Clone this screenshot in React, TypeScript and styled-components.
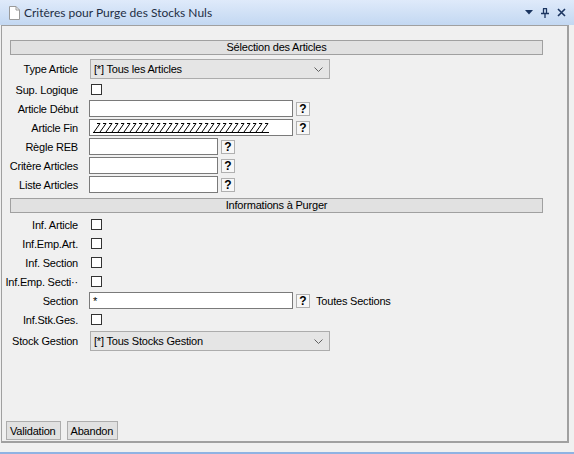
import React from "react";
import styled, { createGlobalStyle } from "styled-components";

const Global = createGlobalStyle`
  html, body { margin: 0; padding: 0; background: #f0f0f0; }
  body {
    font-family: "Liberation Sans", Arial, sans-serif;
    font-size: 11px;
    letter-spacing: -0.2px;
    color: #000;
  }
`;

const Window = styled.div`
  width: 574px;
  height: 454px;
  display: flex;
  flex-direction: column;
  background: #f0f0f0;
  overflow: hidden;
`;

const TitleBar = styled.div`
  height: 25px;
  flex: none;
  display: flex;
  align-items: center;
  padding: 0 9px;
  box-sizing: border-box;
  background: linear-gradient(#dfeafa, #c3d8f2);
`;

const TitleText = styled.span`
  font-family: Lato, "Open Sans", sans-serif;
  font-size: 12px;
  letter-spacing: 0;
  color: #1e2e44;
  margin-left: 4px;
  flex: 1;
`;

const TitleTools = styled.div`
  display: flex;
  align-items: center;
  gap: 8px;
  margin-right: -1px;
`;

const Panel = styled.div`
  flex: none;
  height: 418px;
  margin: 0 5px 0 1px;
  box-sizing: border-box;
  border: 1px solid #a0a0a0;
  border-right-width: 2px;
  border-bottom-width: 2px;
  display: flex;
  flex-direction: column;
`;

const Form = styled.div`
  padding: 14px 24px 0 8px;
  display: flex;
  flex-direction: column;
  flex: 1;
`;

const SectionBar = styled.div<{ $top?: number }>`
  height: 15px;
  box-sizing: border-box;
  margin-top: ${(p) => p.$top ?? 0}px;
  margin-bottom: ${(p) => (p.$top ? 2 : 3)}px;
  background: #e1e1e1;
  border: 1px solid #a0a0a0;
  display: flex;
  align-items: center;
  justify-content: center;
  line-height: 13px;
`;

const Row = styled.div<{ $h?: number }>`
  display: grid;
  grid-template-columns: 68px auto;
  column-gap: 11px;
  align-items: center;
  height: ${(p) => p.$h ?? 19}px;
`;

const Label = styled.div`
  display: flex;
  justify-content: flex-end;
  white-space: nowrap;
  min-width: 0;
`;

const Controls = styled.div`
  display: flex;
  align-items: center;
`;

const Select = styled.div`
  width: 240px;
  height: 20px;
  margin-left: 1px;
  box-sizing: border-box;
  background: #e5e5e5;
  border: 1px solid #acacac;
  display: flex;
  align-items: center;
  justify-content: space-between;
  padding: 0 6px 0 3px;
`;

const CheckBox = styled.div`
  width: 11px;
  height: 11px;
  margin-left: 2px;
  box-sizing: border-box;
  border: 1px solid #333;
  background: #fff;
`;

const Field = styled.div<{ $w: number }>`
  width: ${(p) => p.$w}px;
  height: 17px;
  box-sizing: border-box;
  background: #fff;
  border: 1px solid #7a7a7a;
  display: flex;
  align-items: center;
  padding-left: 3px;
  overflow: hidden;
`;

const Help = styled.div`
  width: 14px;
  height: 14px;
  margin-left: 3px;
  box-sizing: border-box;
  background: #f7f7f7;
  border: 1px solid #b0b0b0;
  display: flex;
  align-items: center;
  justify-content: center;
  font-weight: bold;
  font-size: 12px;
  letter-spacing: 0;
  line-height: 1;
`;

const Note = styled.span`
  margin-left: 6px;
`;

const ButtonBar = styled.div`
  display: flex;
  gap: 6px;
  padding: 0 0 1px 4px;
`;

const Button = styled.div`
  height: 19px;
  box-sizing: border-box;
  padding: 0 4px 0 3px;
  background: #e1e1e1;
  border: 1px solid #adadad;
  display: flex;
  align-items: center;
`;

const BottomEdge = styled.div`
  margin-top: auto;
  height: 2px;
  background: #8fb3e3;
`;

const DocIcon = () => (
  <svg width="11" height="14" viewBox="0 0 11 14">
    <path d="M0.5 0.5 H7 L10.5 4 V13.5 H0.5 Z" fill="#fff" stroke="#9a9a9a" />
    <path d="M7 0.5 V4 H10.5" fill="none" stroke="#9a9a9a" />
  </svg>
);

const Chevron = () => (
  <svg width="9" height="5" viewBox="0 0 9 5">
    <path d="M0.5 0.5 L4.5 4.5 L8.5 0.5" fill="none" stroke="#606060" />
  </svg>
);

// Masked field content: a row of slanted strokes over an underline
const Mask = () => (
  <svg width="176" height="12" viewBox="0 0 176 12">
    {Array.from({ length: 29 }, (_, i) => {
      const x = i * 6;
      return (
        <path
          key={i}
          d={`M${x + 4} 1.5 H${x + 7} L${x + 1} 10`}
          fill="none"
          stroke="#000"
          strokeWidth="1"
        />
      );
    })}
    <path d="M0 10.5 H176" stroke="#000" strokeWidth="1.2" />
  </svg>
);

type LineProps = { label: string; children?: React.ReactNode; h?: number };
const Line = ({ label, children, h }: LineProps) => (
  <Row $h={h}>
    <Label>{label}</Label>
    <Controls>{children}</Controls>
  </Row>
);

export default function App() {
  return (
    <Window>
      <Global />
      <TitleBar>
        <DocIcon />
        <TitleText>Critères pour Purge des Stocks Nuls</TitleText>
        <TitleTools>
          <svg width="8" height="5" viewBox="0 0 8 5">
            <path d="M0 0 H8 L4 4.5 Z" fill="#1b3560" />
          </svg>
          <svg width="8" height="10" viewBox="0 0 8 10">
            <path d="M2 0.5 H6 M2.5 0.5 V5.5 M5.5 0.5 V5.5 M0 5.5 H8 M4 5.5 V10" fill="none" stroke="#1b3560" strokeWidth="1.3" />
          </svg>
          <svg width="9" height="9" viewBox="0 0 9 9">
            <path d="M1 1 L8 8 M8 1 L1 8" stroke="#1b3560" strokeWidth="1.6" />
          </svg>
        </TitleTools>
      </TitleBar>
      <Panel>
        <Form>
          <SectionBar>Sélection des Articles</SectionBar>
          <Line label="Type Article" h={22}>
            <Select>
              <span>[*] Tous les Articles</span>
              <Chevron />
            </Select>
          </Line>
          <Line label="Sup. Logique">
            <CheckBox />
          </Line>
          <Line label="Article Début">
            <Field $w={204} />
            <Help>?</Help>
          </Line>
          <Line label="Article Fin">
            <Field $w={204}>
              <Mask />
            </Field>
            <Help>?</Help>
          </Line>
          <Line label="Règle REB">
            <Field $w={129} />
            <Help>?</Help>
          </Line>
          <Line label="Critère Articles">
            <Field $w={129} />
            <Help>?</Help>
          </Line>
          <Line label="Liste Articles">
            <Field $w={129} />
            <Help>?</Help>
          </Line>
          <SectionBar $top={4}>Informations à Purger</SectionBar>
          <Line label="Inf. Article">
            <CheckBox />
          </Line>
          <Line label="Inf.Emp.Art.">
            <CheckBox />
          </Line>
          <Line label="Inf. Section">
            <CheckBox />
          </Line>
          <Line label="Inf.Emp. Secti··">
            <CheckBox />
          </Line>
          <Line label="Section">
            <Field $w={204}>*</Field>
            <Help>?</Help>
            <Note>Toutes Sections</Note>
          </Line>
          <Line label="Inf.Stk.Ges.">
            <CheckBox />
          </Line>
          <Line label="Stock Gestion" h={24}>
            <Select>
              <span>[*] Tous Stocks Gestion</span>
              <Chevron />
            </Select>
          </Line>
        </Form>
        <ButtonBar>
          <Button>Validation</Button>
          <Button>Abandon</Button>
        </ButtonBar>
      </Panel>
      <BottomEdge />
    </Window>
  );
}
